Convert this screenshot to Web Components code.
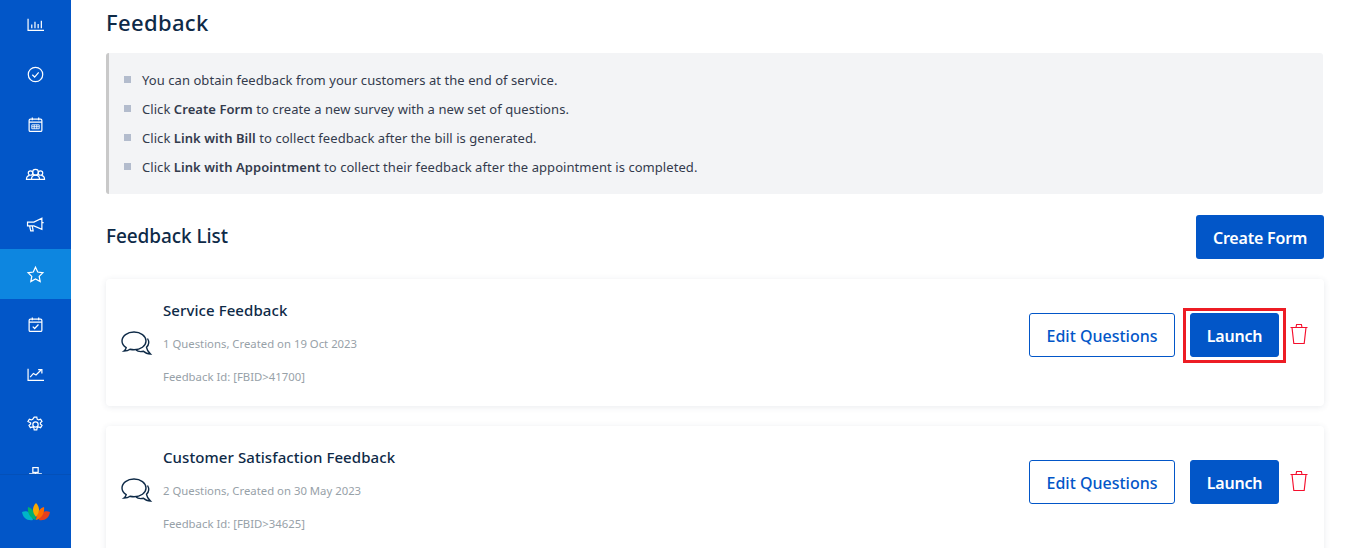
<!DOCTYPE html>
<html>
<head>
<meta charset="utf-8">
<title>Feedback</title>
<style>
	html, body {
		margin: 0;
		padding: 0;
		height: 548px;
		overflow: hidden;
		background: #fff;
		font-family: "Noto Sans", sans-serif;
	}
	body {
		display: flex;
	}
	li b {
		font-weight: 600;
	}
</style>
</head>
<body>
<side-bar></side-bar>
<main-panel>
	<page-note>
		<li>You can obtain feedback from your customers at the end of service.</li>
		<li>Click <b>Create Form</b> to create a new survey with a new set of questions.</li>
		<li>Click <b>Link with Bill</b> to collect feedback after the bill is generated.</li>
		<li>Click <b>Link with Appointment</b> to collect their feedback after the appointment is completed.</li>
	</page-note>
	<feedback-card marked name="Service Feedback" info="1 Questions, Created on 19 Oct 2023" fbid="Feedback Id: [FBID&gt;41700]"></feedback-card>
	<feedback-card name="Customer Satisfaction Feedback" info="2 Questions, Created on 30 May 2023" fbid="Feedback Id: [FBID&gt;34625]"></feedback-card>
</main-panel>

<script>
const icons = {
	chart: '<path d="M1 2.500V13.500h15M4.500 11.500V8M7.500 11.500V5.500M10.500 11.500V7.500M13.500 11.500V4.500"/>',
	check: '<circle cx="8" cy="8" r="6.800"/><path d="M5 8.200l2.200 2.200L11 6"/>',
	calendar: '<rect x="2" y="3" width="12" height="11.500" rx="1.200"/><path d="M5 1.500V4M11 1.500V4M2 5.800h12"/><path stroke-width=".8" d="M4.500 8.300h7v3.700h-7zM4.500 10.100h7M6.800 8.300V12M9.200 8.300V12"/>',
	team: '<circle cx="8" cy="5.800" r="2.700"/><circle cx="3.300" cy="6.600" r="2.100"/><circle cx="12.700" cy="6.600" r="2.100"/><path d="M4.200 12.500c0-2.400 1.700-3.900 3.800-3.900s3.800 1.500 3.800 3.900zM4.200 12.500H-.5c0-2.100 1.200-3.400 3-3.700M11.800 12.500h4.700c0-2.100-1.200-3.400-3-3.700"/>',
	horn: '<path d="M.5 5.800h6L14 2v10.500L6.500 9.300h-6zM14 6.200h1.700M2.500 9.500l1 4.500h2.300L5 9.500"/>',
	star: '<path d="M8 1.200l2.100 4.500 4.900.7-3.500 3.400.9 4.900L8 12.300l-4.400 2.400.9-4.900L1 6.400l4.900-.7z"/>',
	task: '<rect x="2" y="3" width="12" height="11.500" rx="1.200"/><path d="M5 1.500V4M11 1.500V4M2 5.800h12M5.400 10l1.800 1.800L10.800 8"/>',
	growth: '<path d="M1 2.500V13.500h15M3 10.500l3-3.500 2.500 1.500L13 4M10.500 3.500H14V7"/>',
	gear: '<circle cx="8" cy="8" r="2.500"/><path d="M6.800 1h2.400l.4 2 1.300.7 1.900-.7 1.300 2.100-1.500 1.300v1.200l1.500 1.300-1.300 2.100-1.900-.7-1.300.7-.4 2.100H6.800l-.4-2.100-1.300-.7-1.900.7-1.300-2.100 1.500-1.300V6.400L.9 5.100 2.200 3l1.900.7L5.400 3z"/>',
	desk: '<rect x="5.500" y="1.500" width="5" height="4.500"/><path d="M8 6v1.500M2 7.500h12"/>'
};

const sideTemplate = document.createElement('template');
sideTemplate.innerHTML = `
	<style>
		:host {
			display: flex;
			flex-flow: column nowrap;
			flex: 0 0 71px;
			height: 548px;
			background: #0256c8;
		}
		.menu {
			flex: 0 0 474px;
			overflow: hidden;
		}
		.list {
			margin-top: -1px;
		}
		.item {
			height: 50px;
			display: flex;
			justify-content: center;
			align-items: center;
		}
		.item.active {
			background: #0d86e0;
		}
		svg.ico {
			width: 17px;
			height: 17px;
			overflow: visible;
			fill: none;
			stroke: #fff;
			stroke-width: 1.150;
		}
		.logo {
			flex: 1;
			display: flex;
			justify-content: center;
			align-items: center;
			border-top: 1px solid #0450b8;
		}
	</style>
	<div class="menu"><div class="list"></div></div>
	<div class="logo">
		<svg width="30" height="20" viewBox="0 0 30 20">
			<path d="M1 10c5-2 9 0 11 8-6 1-10-2-11-8z" fill="#00b4c8"/>
			<path d="M29 10c-5-2-9 0-11 8 6 1 10-2 11-8z" fill="#e8401c"/>
			<path d="M7 5c4 1 7 5 8 13-5-1-9-6-8-13z" fill="#00b070"/>
			<path d="M23 5c-4 1-7 5-8 13 5-1 9-6 8-13z" fill="#ff6a00"/>
			<path d="M15 1c3 3 4 7 2 11l-2 3-2-3c-2-4-1-8 2-11z" fill="#f9a800"/>
		</svg>
	</div>
`;

class SideBar extends HTMLElement {
	constructor () {
		super();
		this._shadowRoot = this.attachShadow({ mode : 'open' });
		this._shadowRoot.appendChild(sideTemplate.content.cloneNode(true));

		const list = this._shadowRoot.querySelector('.list');
		Object.keys(icons).forEach(name => {
			const item = document.createElement('div');
			item.className = name === 'star' ? 'item active' : 'item';
			item.innerHTML = `<svg class="ico" viewBox="0 0 16 16">${icons[name]}</svg>`;
			list.appendChild(item);
		});
	}
}

const panelTemplate = document.createElement('template');
panelTemplate.innerHTML = `
	<style>
		:host {
			display: block;
			flex: 1;
			min-width: 0;
			padding: 5px 24px 0 35px;
			color: #0e2a47;
		}
		h1 {
			margin: 0;
			font-size: 22px;
			line-height: 34px;
			font-weight: 500;
			letter-spacing: .35px;
		}
		.head {
			display: flex;
			justify-content: space-between;
			align-items: center;
			margin: 21px 0 20px;
		}
		h2 {
			margin: -2px 0 0;
			font-size: 19px;
			line-height: 44px;
			font-weight: 500;
			letter-spacing: -.08px;
		}
		button {
			width: 128px;
			height: 44px;
			padding: 2px 0 0;
			border: 0;
			border-radius: 3px;
			background: #0256c8;
			color: #fff;
			font: 600 16px "Noto Sans", sans-serif;
			letter-spacing: -.2px;
		}
	</style>
	<h1>Feedback</h1>
	<slot name="note"></slot>
	<div class="head">
		<h2>Feedback List</h2>
		<button>Create Form</button>
	</div>
	<slot></slot>
`;

class MainPanel extends HTMLElement {
	constructor () {
		super();
		this._shadowRoot = this.attachShadow({ mode : 'open' });
		this._shadowRoot.appendChild(panelTemplate.content.cloneNode(true));
	}
}

const noteTemplate = document.createElement('template');
noteTemplate.innerHTML = `
	<style>
		:host {
			display: block;
			margin: 14px 1px 0 0;
			box-sizing: border-box;
			height: 141px;
			padding: 13px 0 0 15px;
			background: #f3f4f6;
			border-left: 3px solid #c9c9c9;
			border-radius: 3px;
			font-size: 13px;
			line-height: 29px;
			letter-spacing: .06px;
			color: #333b4d;
		}
		ul {
			margin: 0;
			padding: 0;
			list-style: none;
		}
		::slotted(li) {
			display: block;
			position: relative;
			padding-left: 18px;
		}
		::slotted(li)::before {
			content: "";
			position: absolute;
			left: 0;
			top: 10px;
			width: 7px;
			height: 7px;
			background: #b3bccd;
		}
	</style>
	<ul><slot></slot></ul>
`;

class PageNote extends HTMLElement {
	constructor () {
		super();
		this.setAttribute('slot', 'note');
		this._shadowRoot = this.attachShadow({ mode : 'open' });
		this._shadowRoot.appendChild(noteTemplate.content.cloneNode(true));
	}
}

const cardTemplate = document.createElement('template');
cardTemplate.innerHTML = `
	<style>
		:host {
			display: flex;
			align-items: center;
			box-sizing: border-box;
			height: 127px;
			margin-bottom: 20px;
			padding: 0 15px;
			background: #fff;
			border-radius: 4px;
			box-shadow: 0 1px 6px rgba(40, 60, 90, .10);
		}
		.bubble {
			flex: 0 0 32px;
			height: 26px;
			margin: 2px 10px 0 0;
			fill: none;
			stroke: #0e2a47;
			stroke-width: 1.400;
		}
		.text {
			flex: 1;
			padding-top: 4px;
		}
		.name {
			font-size: 15px;
			font-weight: 500;
			line-height: 22px;
			letter-spacing: .08px;
			margin-top: -2px;
			color: #0e2a47;
		}
		.sub {
			font-size: 11.330px;
			line-height: 22px;
			color: #97a1a8;
		}
		.info {
			margin-top: 12px;
		}
		.fbid {
			margin-top: 11px;
		}
		button {
			height: 44px;
			box-sizing: border-box;
			padding: 2px 0 0;
			border-radius: 3px;
			border: 1px solid #0256c8;
			font: 600 16px "Noto Sans", sans-serif;
			letter-spacing: -.2px;
		}
		.edit {
			width: 146px;
			margin-bottom: 16px;
			background: #fff;
			color: #0256c8;
			font-weight: 500;
			letter-spacing: 0;
		}
		.launchbox {
			position: relative;
			margin: 0 0 16px 15px;
			display: flex;
		}
		.launch {
			width: 89px;
			background: #0256c8;
			color: #fff;
		}
		:host([marked]) .launchbox::after {
			content: "";
			position: absolute;
			inset: -5px -7px -6px -7px;
			border: 3px solid #ed1c24;
			pointer-events: none;
		}
		.trash {
			width: 20px;
			height: 22px;
			margin: 0 0 17px 10px;
			fill: none;
			stroke: #f50f2d;
			stroke-width: 1.150;
		}
	</style>
	<svg class="bubble" viewBox="0 0 32 26">
		<path d="M13 1C6.400 1 1 4.900 1 10c0 2.800 1.700 5.100 4.200 6.700-.2 1.300-1 2.500-2.200 3.300 2.500 0 4.500-.6 6-1.800 1.300.3 2.600.5 4 .5 6.600 0 12-3.700 12-8.700S19.600 1 13 1z"/>
		<path d="M26.500 7.500c1.700 2.700 1.300 6.400-1 8.800.3 2.200 1.300 4.200 4 6.700-3 0-5.300-1-7-2.700-2.800.6-5.800.3-7.500-1.300"/>
	</svg>
	<div class="text">
		<div class="name"></div>
		<div class="sub info"></div>
		<div class="sub fbid"></div>
	</div>
	<button class="edit">Edit Questions</button>
	<div class="launchbox"><button class="launch">Launch</button></div>
	<svg class="trash" viewBox="0 0 20 22">
		<path d="M1.500 4.500h17M3 4.500L4.800 20.500h10.400L17 4.500M7 4.500L7.600 1.500h4.800L13 4.500"/>
	</svg>
`;

class FeedbackCard extends HTMLElement {
	constructor () {
		super();
		this._shadowRoot = this.attachShadow({ mode : 'open' });
		this._shadowRoot.appendChild(cardTemplate.content.cloneNode(true));
	}
	connectedCallback () {
		this._shadowRoot.querySelector('.name').textContent = this.getAttribute('name');
		this._shadowRoot.querySelector('.info').textContent = this.getAttribute('info');
		this._shadowRoot.querySelector('.fbid').textContent = this.getAttribute('fbid');
	}
}

window.customElements.define('side-bar', SideBar);
window.customElements.define('main-panel', MainPanel);
window.customElements.define('page-note', PageNote);
window.customElements.define('feedback-card', FeedbackCard);
</script>
</body>
</html>
